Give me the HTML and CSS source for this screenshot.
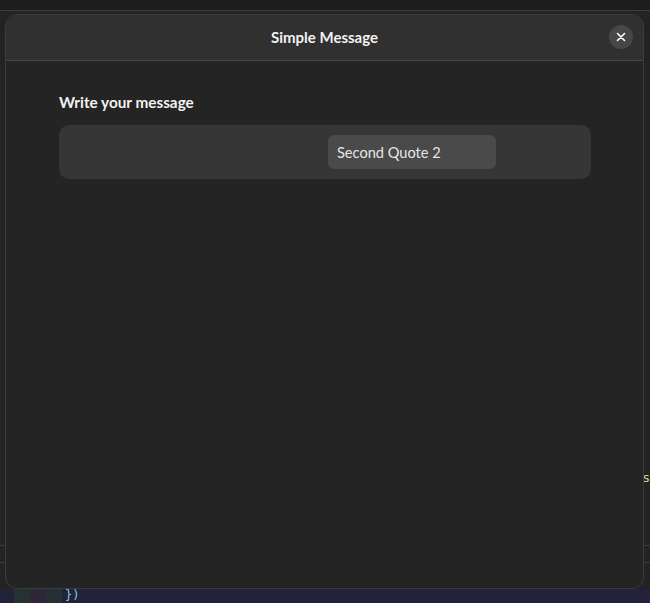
FILE: index.html
```html
<!DOCTYPE html>
<html>
<head>
    <meta charset="UTF-8">
    <title>Simple Message</title>
    <link rel="stylesheet" href="styles.css">
</head>
<body>
    <div class="desktop">
        <div class="backdrop">
            <div class="topbar"></div>
            <div class="code-letter">s</div>
            <div class="rule rule-a"></div>
            <div class="rule rule-b"></div>
            <div class="gutter">
                <span class="tile tile-teal"></span>
                <span class="tile tile-purple"></span>
                <span class="tile tile-teal2"></span>
                <span class="code-brace">})</span>
            </div>
        </div>

        <div class="dialog">
            <div class="dialog-header">
                <span class="dialog-title">Simple Message</span>
                <button class="close-button" aria-label="Close">
                    <svg width="10" height="10" viewBox="0 0 10 10">
                        <path d="M1.5 1.5 L8.5 8.5 M8.5 1.5 L1.5 8.5" stroke="#fff" stroke-width="1.6" stroke-linecap="round"/>
                    </svg>
                </button>
            </div>
            <div class="dialog-body">
                <div class="field-label">Write your message</div>
                <div class="field-row">
                    <input type="text" class="message-input" value="Second Quote 2">
                </div>
            </div>
        </div>
    </div>
</body>
</html>
```

FILE: styles.css
```css
body {
    margin: 0;
    background-color: #232323;
    font-family: Lato, "Noto Sans", sans-serif;
    color: #fff;
    overflow: hidden;
}

.desktop {
    position: relative;
    width: 650px;
    height: 603px;
    padding-top: 14px;
    box-sizing: border-box;
}

.backdrop {
    position: absolute;
    top: 0;
    left: 0;
    width: 100%;
    height: 100%;
    pointer-events: none;
}

.topbar {
    height: 10px;
    background-color: #1d1d1d;
    border-bottom: 1px solid #3c3c3c;
}

.code-letter {
    position: absolute;
    top: 470px;
    right: 0;
    font-family: "DejaVu Sans Mono", monospace;
    font-size: 13px;
    color: #d8d08a;
}

.rule {
    position: absolute;
    left: 0;
    width: 100%;
    height: 1px;
    background-color: #3a3a42;
}

.rule-a { top: 545px; }
.rule-b { top: 562px; }

.gutter {
    position: absolute;
    left: 0;
    bottom: 0;
    width: 100%;
    height: 14px;
    display: flex;
    background-color: #22223a;
}

.tile {
    width: 16px;
    height: 100%;
}

.tile-teal { margin-left: 14px; background-color: #243234; }
.tile-purple { background-color: #2e2638; }
.tile-teal2 { background-color: #243034; }

.code-brace {
    margin-left: 3px;
    font-family: "DejaVu Sans Mono", monospace;
    font-size: 12px;
    line-height: 12px;
    color: #7ad0e0;
}

.dialog {
    position: relative;
    margin-left: 5px;
    width: 639px;
    height: 575px;
    box-sizing: border-box;
    background-color: #242424;
    border: 1px solid #3b3b3b;
    border-radius: 12px;
    overflow: hidden;
}

.dialog-header {
    position: relative;
    height: 46px;
    box-sizing: border-box;
    padding-bottom: 2px;
    background-color: #303030;
    border-bottom: 1px solid #464646;
    display: flex;
    align-items: center;
    justify-content: center;
}

.dialog-title {
    font-size: 15px;
    font-weight: bold;
    color: #f2f2f2;
}

.close-button {
    position: absolute;
    top: 10px;
    right: 10px;
    width: 24px;
    height: 24px;
    padding: 0;
    border: none;
    border-radius: 50%;
    background-color: #474747;
    display: flex;
    align-items: center;
    justify-content: center;
    cursor: pointer;
}

.dialog-body {
    padding: 31px 52px 0 53px;
}

.field-label {
    font-size: 15.3px;
    font-weight: bold;
    line-height: 20px;
    color: #f2f2f2;
}

.field-row {
    margin-top: 13px;
    height: 54px;
    box-sizing: border-box;
    padding: 10px 0 10px 269px;
    background-color: #363636;
    border-radius: 10px;
}

.message-input {
    width: 168px;
    height: 34px;
    box-sizing: border-box;
    padding: 0 9px;
    font-family: Lato, "Noto Sans", sans-serif;
    font-size: 14.6px;
    color: #e6e6e6;
    background-color: #4a4a4a;
    border: none;
    border-radius: 6px;
    outline: none;
}
```
